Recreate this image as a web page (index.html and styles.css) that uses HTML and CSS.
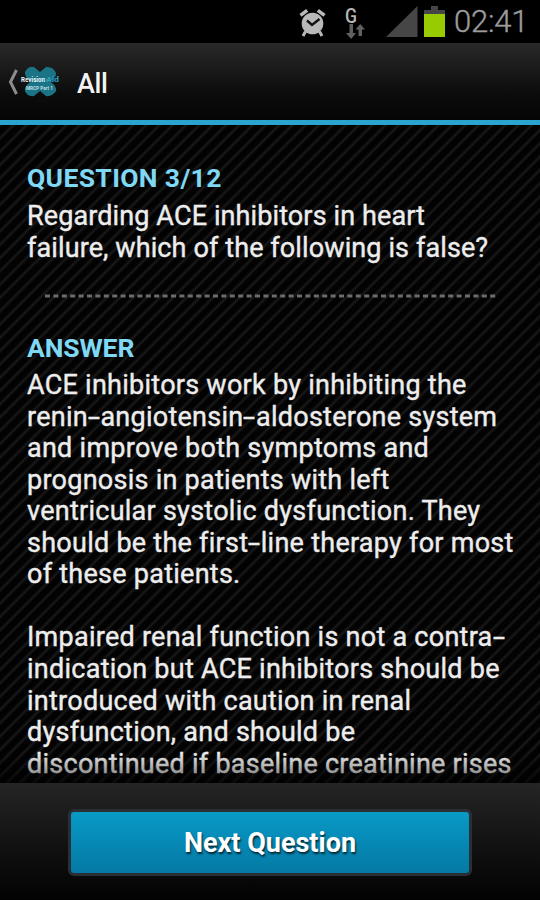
FILE: index.html
```html
<!DOCTYPE html>
<html lang="en">
<head>
<meta charset="utf-8">
<title>All</title>
<link rel="stylesheet" href="styles.css">
</head>
<body>
<div class="screen">
  <div class="status">
    <svg class="alarm" width="28" height="30" viewBox="0 0 28 30" fill="none" stroke="#b9b9b9">
      <circle cx="13.5" cy="15.5" r="10.8" fill="#b9b9b9" stroke="none"/>
      <path d="M1.500 7.400 8.200 2.400M18.800 2.400 25.500 7.400" stroke-width="3.6"/>
      <path d="M6.5 23.500 4 28M20.500 23.500 23 28" stroke-width="3"/>
      <path d="M8 12.500 13 17 20.500 11" stroke="#111" stroke-width="2.400"/>
    </svg>
    <div class="data">
      <span class="data-g">G</span>
      <svg class="data-arrows" width="19" height="15" viewBox="0 0 19 15" fill="#606060">
        <path d="M3.500 0h3.500v9h3L5.200 15 0 9h3.500zM12.500 12V5.500h-3L14.300 0 19 5.500h-3V12z"/>
      </svg>
    </div>
    <svg class="signal" width="32" height="31" viewBox="0 0 32 31"><path d="M0 31 31.500 0V31z" fill="#464646"/></svg>
    <svg class="battery" width="21" height="31" viewBox="0 0 21 31">
      <path d="M0 4H7V0H14V4H21V8H0z" fill="#464646"/>
      <path d="M0 8H21V31H0z" fill="#99cc00"/>
    </svg>
    <span class="clock">02:41</span>
  </div>
  <div class="bar">
    <svg class="back" width="12" height="28" viewBox="0 0 12 28"><path d="M9.500 2 3.500 14 9.500 26" fill="none" stroke="#8c8c8c" stroke-width="3"/></svg>
    <svg class="logo" width="42" height="34" viewBox="0 0 42 34">
      <path d="M5 7Q8 1 14 2L20 7 26 2Q33 1 36 8 37 12 30 16.500 37 21 36 26 32 32 26 31L20 26 14 31Q7 32 5 26 4 21 11 16.500 4 12 5 7z" fill="#1b7486"/>
      <text class="logo-name" x="1" y="17" textLength="24" lengthAdjust="spacingAndGlyphs" fill="#e8f5f7">Revision</text>
      <text class="logo-name" x="26" y="17" textLength="13" lengthAdjust="spacingAndGlyphs" fill="#2aa3c7">Aid</text>
      <text class="logo-sub" x="6" y="25" textLength="27" lengthAdjust="spacingAndGlyphs" fill="#c2dce1">MRCP Part 1</text>
    </svg>
    <span class="title">All</span>
  </div>
  <div class="content">
    <h2>QUESTION 3/12</h2>
    <p class="question">Regarding ACE inhibitors in heart<br>failure, which of the following is false?</p>
    <svg class="divider" width="451" height="4" viewBox="0 0 451 4"><path d="M0 2H451" stroke="#6c6c6c" stroke-width="3" stroke-dasharray="5 3.400"/></svg>
    <h2 class="answer-title">ANSWER</h2>
    <p>ACE inhibitors work by inhibiting the<br>renin<span class="hy">-</span>angiotensin<span class="hy">-</span>aldosterone system<br>and improve both symptoms and<br>prognosis in patients with left<br>ventricular systolic dysfunction. They<br>should be the first<span class="hy">-</span>line therapy for most<br>of these patients.<br><br>Impaired renal function is not a contra<span class="hy">-</span><br>indication but ACE inhibitors should be<br>introduced with caution in renal<br>dysfunction, and should be<br>discontinued if baseline creatinine rises</p>
    <div class="fade"></div>
  </div>
  <div class="footer"><button class="next">Next Question</button></div>
</div>
</body>
</html>
```
FILE: styles.css
```css
* { box-sizing: border-box; }
body { margin: 0; background: #000; font-family: Roboto, sans-serif; }
.screen { width: 540px; height: 900px; display: flex; flex-direction: column; overflow: hidden; }
.status { height: 43px; flex: none; display: flex; align-items: flex-start; background: #000; padding: 6px 0 0 299px; }
.alarm { margin-top: 2px; }
.data { width: 22px; margin-left: 18px; display: flex; flex-direction: column; }
.data-g { font-size: 20px; line-height: 20px; font-weight: 500; color: #b5b5b5; transform: scaleX(.88); transform-origin: left; }
.data-arrows { align-self: flex-end; margin: -2px 2px 0 0; }
.signal { margin-left: 19px; }
.battery { margin-left: 6px; }
.clock { margin-left: 9px; font-size: 31px; line-height: 31px; font-weight: 300; color: #9c9c9c; -webkit-text-stroke: .4px #9c9c9c; letter-spacing: -.2px; }
.bar { height: 82px; flex: none; display: flex; align-items: center; padding-left: 7px; background: linear-gradient(#292929, #0c0c0c 65%, #050505); border-bottom: 5px solid #2ba3cf; }
.logo { margin-left: 1px; }
.logo-name { font-size: 7px; font-weight: 700; }
.logo-sub { font-size: 4.5px; font-weight: 700; }
.title { margin: 4px 0 0 15px; font-size: 27px; font-weight: 500; color: #f3f3f3; letter-spacing: -.4px; }
.content { height: 658px; flex: none; overflow: hidden; position: relative; padding: 37px 0 0 27px; background: repeating-linear-gradient(135deg, #191919 0, #020202 2.4px, #020202 7px, #191919 9.4px); }
h2 { margin: 0; font-size: 26.5px; line-height: 32px; font-weight: 700; color: #7fd8f4; letter-spacing: .35px; }
.answer-title { letter-spacing: -.1px; }
p { margin: 6px 0 0; font-size: 27px; line-height: 31.55px; color: #ededed; white-space: nowrap; letter-spacing: .26px; -webkit-text-stroke: .4px #ededed; }
.question { margin-top: 7px; letter-spacing: .11px; }
.hy { display: inline-block; width: 12.5px; transform: scaleX(1.6); transform-origin: left; }
.divider { display: block; margin: 30px 0 34px 18px; }
.fade { position: absolute; left: 0; right: 0; bottom: 0; height: 30px; background: linear-gradient(rgba(0,0,0,0), rgba(0,0,0,.55)); }
.footer { flex: 1; display: flex; justify-content: center; align-items: flex-start; padding-top: 26px; background: linear-gradient(#252525, #111 55%, #020202); }
.next { width: 404px; height: 67px; padding: 0; border: 3px solid #292f35; border-radius: 6px; background: linear-gradient(#0899c5, #0579a5); color: #fff; font: 700 27px Roboto, sans-serif; text-shadow: 1px 2px 2px rgba(0,0,0,.7); }
```
